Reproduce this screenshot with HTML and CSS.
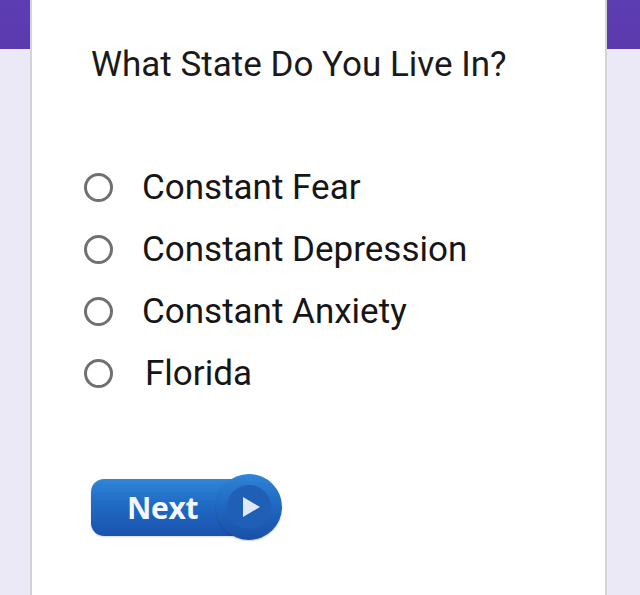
FILE: index.html
```html
<!DOCTYPE html>
<html>
<head>
<meta charset="utf-8">
<link rel="stylesheet" href="styles.css">
</head>
<body>
<div class="page">
  <div class="card">
    <h1 class="title">What State Do You Live In?</h1>
    <ul class="options">
      <li class="option"><span class="radio"></span><span class="label">Constant Fear</span></li>
      <li class="option"><span class="radio"></span><span class="label">Constant Depression</span></li>
      <li class="option"><span class="radio"></span><span class="label">Constant Anxiety</span></li>
      <li class="option"><span class="radio"></span><span class="label label-shift">Florida</span></li>
    </ul>
    <div class="btn-wrap">
      <button class="next-btn">
        <span class="next-pill"><span class="next-text">Next</span></span>
        <span class="next-circle">
          <span class="next-inner">
            <svg width="20" height="22" viewBox="0 0 20 22"><polygon points="2,1 19,11 2,21" fill="#dfe9f7"/></svg>
          </span>
        </span>
      </button>
    </div>
  </div>
</div>
</body>
</html>
```
FILE: styles.css
```css
html, body {
  margin: 0;
  padding: 0;
  height: 100%;
}
body {
  background: linear-gradient(to bottom, #5d3db2 0, #5b3aae 49px, #ebe9f5 49px, #ebe9f5 100%);
  font-family: Roboto, "Noto Sans", sans-serif;
  overflow: hidden;
}
.page {
  display: flex;
  justify-content: flex-start;
  height: 595px;
  padding-left: 30px;
}
.card {
  width: 577px;
  height: 100%;
  background: #fff;
  border-left: 2px solid #d3d3d8;
  border-right: 2px solid #d3d3d8;
  box-sizing: border-box;
  padding: 45px 0 0 59px;
}
.title {
  margin: 0;
  font-weight: 400;
  font-size: 35px;
  line-height: 40px;
  color: #1a1a1a;
}
.options {
  list-style: none;
  margin: 82px 0 0 -7px;
  padding: 0;
  display: flex;
  flex-direction: column;
  gap: 22px;
}
.option {
  display: flex;
  align-items: center;
  height: 40px;
}
.radio {
  width: 23px;
  height: 23px;
  border: 3px solid #707070;
  border-radius: 50%;
  flex: none;
}
.label {
  margin-left: 29px;
  font-size: 35px;
  color: #161616;
}
.label-shift {
  margin-left: 32px;
}
.btn-wrap {
  margin-top: 81px;
  margin-left: 0;
}
.next-btn {
  border: 0;
  padding: 0;
  background: transparent;
  display: flex;
  align-items: center;
  cursor: pointer;
}
.next-pill {
  width: 170px;
  height: 57px;
  border-radius: 13px;
  background: linear-gradient(to bottom, #2f86d8 0%, #1f6ac4 45%, #1a52ad 100%);
  display: flex;
  align-items: center;
  box-shadow: 0 1px 2px rgba(0,0,0,0.15);
}
.next-text {
  margin-left: 36px;
  font-family: "Open Sans", "DejaVu Sans", sans-serif;
  font-weight: 700;
  font-size: 30px;
  color: #f4f8fd;
  letter-spacing: -0.3px;
}
.next-circle {
  margin-left: -45px;
  width: 66px;
  height: 66px;
  border-radius: 50%;
  background: linear-gradient(to bottom, #2e84d6 0%, #1e64bd 55%, #1a4fa8 100%);
  display: flex;
  align-items: center;
  justify-content: center;
  box-shadow: 0 1px 2px rgba(0,0,0,0.2);
}
.next-inner {
  width: 44px;
  height: 44px;
  border-radius: 50%;
  background: #1f5fb5;
  display: flex;
  align-items: center;
  justify-content: center;
}
.next-inner svg {
  margin-left: 4px;
}
```
